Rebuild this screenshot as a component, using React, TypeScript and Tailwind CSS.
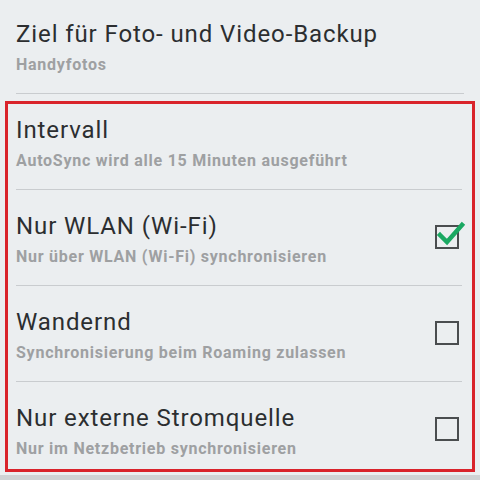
const rows = [
  { title: "Nur WLAN (Wi-Fi)", sub: "Nur über WLAN (Wi-Fi) synchronisieren", checked: true },
  { title: "Wandernd", sub: "Synchronisierung beim Roaming zulassen", checked: false },
];

function Checkbox({ checked }: { checked: boolean }) {
  return (
    <div className="relative h-[24px] w-[24px] border-2 border-[#4a4d4f]">
      {checked && (
        <svg className="absolute -left-[1px] -top-[6px]" width="30" height="26" viewBox="0 0 30 26">
          <path d="M4 14 L11 21 L26 4" fill="none" stroke="#1aa862" strokeWidth="4.5" strokeLinecap="square" />
        </svg>
      )}
    </div>
  );
}

function Texts({ title, sub }: { title: string; sub: string }) {
  return (
    <div className="flex flex-col">
      <div className="text-[24px] leading-[28px] tracking-[0.9px] text-[#2c2e30]">{title}</div>
      <div className="mt-[7px] text-[16px] font-bold leading-[20px] tracking-[0.75px] text-[#9ea0a2]">{sub}</div>
    </div>
  );
}

export default function App() {
  return (
    <div
      className="flex h-[480px] w-[480px] flex-col overflow-hidden bg-[#ebeef0]"
      style={{ fontFamily: "Roboto, 'Liberation Sans', sans-serif" }}
    >
      <div className="h-[93px] px-4 pt-[20px]">
        <Texts title="Ziel für Foto- und Video-Backup" sub="Handyfotos" />
      </div>
      <div className="mx-4 h-px bg-[#c9cccf]" />

      <div className="mx-[5px] mt-[7px] flex flex-col border-[3px] border-[#d9232b]">
        <div className="h-[85px] pl-[8px] pt-[12px]">
          <Texts title="Intervall" sub="AutoSync wird alle 15 Minuten ausgeführt" />
        </div>
        {rows.map((r) => (
          <div key={r.title}>
            <div className="ml-[8px] mr-[10px] h-px bg-[#c9cccf]" />
            <div className="flex h-[95px] items-start justify-between pl-[8px] pr-[13px] pt-[22px]">
              <Texts title={r.title} sub={r.sub} />
              <div className="mt-[13px]">
                <Checkbox checked={r.checked} />
              </div>
            </div>
          </div>
        ))}
        <div className="ml-[8px] mr-[10px] h-px bg-[#c9cccf]" />
        <div className="flex h-[87px] items-start justify-between pl-[8px] pr-[13px] pt-[22px]">
          <Texts title="Nur externe Stromquelle" sub="Nur im Netzbetrieb synchronisieren" />
          <div className="mt-[13px]">
            <Checkbox checked={false} />
          </div>
        </div>
      </div>
      <div className="mt-[3px] flex-1 bg-[#cfd2d4]" />
    </div>
  );
}
